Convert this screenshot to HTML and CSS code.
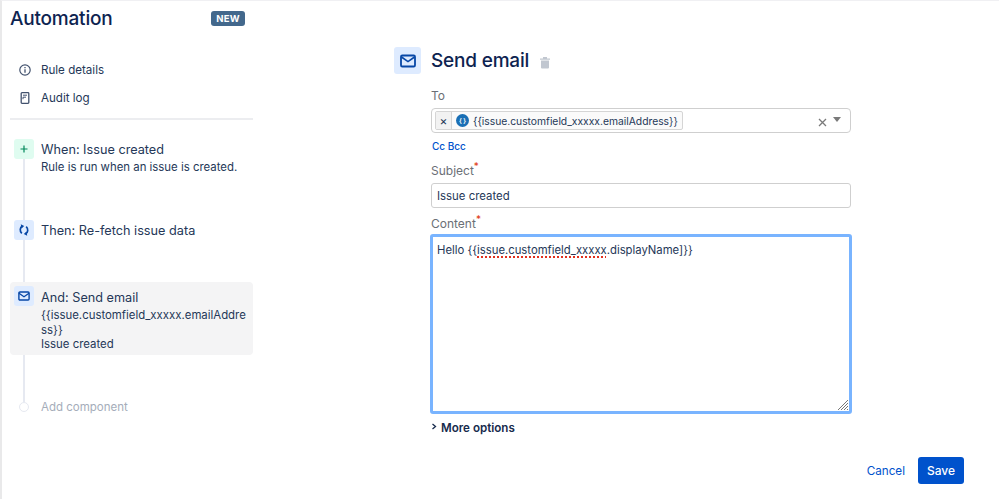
FILE: index.html
```html
<!DOCTYPE html>
<html lang="en">
<head>
  <meta charset="UTF-8" />
  <title>Automation</title>
  <link rel="stylesheet" href="styles.css">
</head>
<body>
  <div class="page">
    <aside class="sidebar">
      <div class="brand">
        <h1>Automation</h1>
        <span class="badge">NEW</span>
      </div>
      <nav class="side-nav">
        <a class="nav-item">
          <svg width="14" height="14" viewBox="0 0 14 14" fill="none"><circle cx="7" cy="7" r="5.200" stroke="#42526e" stroke-width="1.200"/><path d="M7 6.300v3.400M7 4.100v1.200" stroke="#42526e" stroke-width="1.300"/></svg>
          Rule details
        </a>
        <a class="nav-item">
          <svg width="14" height="14" viewBox="0 0 14 14" fill="none"><rect x="3.200" y="1.700" width="7.600" height="10.600" rx=".8" stroke="#42526e" stroke-width="1.300"/><path d="M5 4.200h4M5 6.200h3M5 6.200v2" stroke="#42526e" stroke-width="1"/></svg>
          Audit log
        </a>
      </nav>
      <div class="steps">
        <div class="step step-when">
          <span class="step-icon icon-green">
            <svg width="10" height="10" viewBox="0 0 10 10"><path d="M5 1.500v7M1.500 5h7" stroke="#00875a" stroke-width="1.200"/></svg>
          </span>
          <div class="step-body">
            <div class="step-title">When: Issue created</div>
            <div class="step-text">Rule is run when an issue is created.</div>
          </div>
        </div>
        <div class="step step-then">
          <span class="step-icon icon-blue">
            <svg width="14" height="14" viewBox="0 0 14 14" fill="none"><path d="M5.300 3.400C3 4.300 2.400 7.900 4.800 10.300M8.700 10.600C11 9.700 11.600 6.100 9.200 3.700" stroke="#0747a6" stroke-width="1.700"/><path d="M3.800 1.300l3.400 1.800-2.800 2.400zM10.200 12.700l-3.400-1.800 2.800-2.400z" fill="#0747a6"/></svg>
          </span>
          <div class="step-body">
            <div class="step-title">Then: Re-fetch issue data</div>
          </div>
        </div>
        <div class="step step-active">
          <span class="step-icon icon-blue">
            <svg width="12" height="12" viewBox="0 0 12 12" fill="none"><rect x=".9" y="2" width="10.200" height="8" rx="1" stroke="#0747a6" stroke-width="1.400"/><path d="M1 3.300l5 3.400 5-3.400" stroke="#0747a6" stroke-width="1.300"/></svg>
          </span>
          <div class="step-body">
            <div class="step-title">And: Send email</div>
            <div class="step-text wrap">{{issue.customfield_xxxxx.emailAddress}}<br>Issue created</div>
          </div>
        </div>
        <div class="step step-add">
          <span class="add-dot"></span>
          <div class="add-label">Add component</div>
        </div>
      </div>
    </aside>

    <main class="editor">
      <div class="editor-head">
        <span class="head-icon">
          <svg width="16" height="14" viewBox="0 0 16 14" fill="none"><rect x="1" y="1.500" width="14" height="11" rx="1.300" stroke="#0747a6" stroke-width="1.800"/><path d="M1.500 3l6.500 4.600L14.500 3" stroke="#0747a6" stroke-width="1.600"/></svg>
        </span>
        <h2>Send email</h2>
        <svg class="trash" width="12" height="13" viewBox="0 0 12 13"><path d="M1 2.500h10v1.300H1zM4 1h4v1.500H4zM2 4.500h8v7a1 1 0 0 1-1 1H3a1 1 0 0 1-1-1z" fill="#c1c7d0"/></svg>
      </div>
      <form class="form">
        <label class="field-label">To</label>
        <div class="picker">
          <span class="tag">
            <span class="tag-remove">×</span>
            <span class="tag-value">
              <span class="tag-dot">{ }</span>
              {{issue.customfield_xxxxx.emailAddress}}
            </span>
          </span>
          <svg class="clear" width="9" height="9" viewBox="0 0 9 9"><path d="M1 1l7 7M8 1L1 8" stroke="#7a7a7a" stroke-width="1.300"/></svg>
          <span class="caret"></span>
        </div>
        <div class="cc-links">Cc Bcc</div>
        <label class="field-label subject-label">Subject<sup>*</sup></label>
        <div class="text-input">Issue created</div>
        <label class="field-label content-label">Content<sup>*</sup></label>
        <div class="text-area">
          Hello {{<span class="misspelled">issue.customfield_xxxxx</span>.displayName]}}
          <svg class="grip" width="12" height="12" viewBox="0 0 12 12"><path d="M1 11L11 1M4 11l7-7M7 11l4-4M10 11l1-1" stroke="#777" stroke-width="1"/></svg>
        </div>
        <div class="more-options">
          <svg width="6" height="8" viewBox="0 0 6 8" fill="none"><path d="M1.500 1l3 2.500-3 2.500" stroke="#172b4d" stroke-width="1.300"/></svg>
          More options
        </div>
        <div class="actions">
          <a class="cancel">Cancel</a>
          <button type="button" class="save">Save</button>
        </div>
      </form>
    </main>
  </div>
</body>
</html>
```

FILE: styles.css
```css
* { box-sizing: border-box; }
html, body { height: 100%; }
body {
  margin: 0;
  font-family: Inter, "Liberation Sans", Arial, sans-serif;
  color: #172b4d;
  background: #fff;
  overflow: hidden;
}
.page {
  display: flex;
  height: 499px;
  border-top: 1px solid #f0f0f3;
  border-left: 2px solid #e9e9ea;
}

/* left column */
.sidebar {
  width: 243px;
  margin-left: 8px;
  flex-shrink: 0;
}
.brand {
  display: flex;
  align-items: center;
  justify-content: space-between;
  height: 34px;
  padding-right: 8px;
}
.brand h1 {
  margin: 0;
  font-size: 19px;
  font-weight: 500;
  letter-spacing: -0.2px;
  color: #0d2350;
}
.badge {
  background: #43688c;
  color: #fff;
  font-size: 9.500px;
  font-weight: 700;
  letter-spacing: 0.3px;
  padding: 2px 5px;
  border-radius: 3px;
  line-height: 11px;
}
.side-nav {
  padding: 21px 0 6px;
  border-bottom: 2px solid #ecedf0;
}
.nav-item {
  display: flex;
  align-items: center;
  gap: 9px;
  height: 28px;
  padding-left: 8px;
  font-size: 11.600px;
  color: #253858;
}
.steps { position: relative; padding-top: 19px; }
.steps::before {
  content: "";
  position: absolute;
  left: 13px;
  top: 30px;
  height: 252px;
  width: 2px;
  background: #e6e9f1;
}
.step {
  position: relative;
  display: flex;
  gap: 7px;
  padding-left: 4px;
  border-radius: 4px;
}
.step-when { height: 81px; }
.step-then { height: 62px; }
.step-active {
  background: #f4f4f5;
  padding-top: 4px;
  height: 73px;
}
.step-add { margin-top: 44px; align-items: center; height: 16px; padding-left: 9px; gap: 12px; }
.step-icon {
  width: 20px;
  height: 20px;
  flex-shrink: 0;
  border-radius: 3px;
  display: flex;
  align-items: center;
  justify-content: center;
}
.icon-green { background: #dffcf0; }
.icon-blue { background: #deebff; }
.step-body { min-width: 0; flex: 1; padding-top: 1px; }
.step-active .step-body { padding-top: 2px; }
.step-title {
  font-size: 12.700px;
  line-height: 20px;
  color: #253858;
}
.step-text {
  font-size: 11.400px;
  line-height: 14px;
  color: #253858;
}
.step-active .step-text { line-height: 14.500px; }
.wrap { overflow-wrap: anywhere; padding-right: 6px; }
.add-dot {
  width: 10px;
  height: 10px;
  flex-shrink: 0;
  border-radius: 50%;
  border: 1px solid #e6e9f1;
  background: #fff;
}
.add-label { font-size: 11.500px; color: #a5adba; }

/* right column */
.editor { margin-left: 141px; width: 457px; }
.editor-head {
  display: flex;
  align-items: center;
  margin-top: 46px;
  height: 27px;
}
.head-icon {
  width: 27px;
  height: 27px;
  border-radius: 3px;
  background: #deebff;
  display: flex;
  align-items: center;
  justify-content: center;
}
.editor-head h2 {
  margin: 0 0 0 10px;
  font-size: 19px;
  font-weight: 500;
  letter-spacing: -0.2px;
  color: #0d2350;
}
.trash { margin: 3px 0 0 10px; }
.form { padding-left: 37px; }
.field-label {
  display: block;
  font-size: 12px;
  line-height: 16px;
  color: #6b6f76;
  margin-top: 14px;
}
.field-label sup {
  color: #de350b;
  font-size: 10px;
  line-height: 0;
}
.picker {
  display: flex;
  align-items: center;
  height: 25px;
  margin-top: 4px;
  padding: 0 9px 0 3px;
  border: 1px solid #cfcfcf;
  border-radius: 4px;
}
.tag {
  display: flex;
  align-items: center;
  height: 19px;
  border: 1px solid #d5d5d5;
  border-radius: 2px;
  background: #fafafa;
  font-size: 10.300px;
  color: #253858;
}
.tag-remove {
  width: 16px;
  text-align: center;
  border-right: 1px solid #d5d5d5;
  line-height: 17px;
  font-size: 12px;
  background: #f2f2f2;
}
.tag-value { display: flex; align-items: center; gap: 4px; padding: 0 4px; }
.tag-dot {
  width: 13px;
  height: 13px;
  border-radius: 50%;
  background: #1a6fb5;
  color: #fff;
  font-size: 6px;
  font-weight: 700;
  line-height: 13px;
  text-align: center;
}
.clear { margin-left: auto; margin-top: 4px; }
.caret {
  margin-left: 6px;
  margin-bottom: 2px;
  border-left: 4px solid transparent;
  border-right: 4px solid transparent;
  border-top: 5px solid #7a7a7a;
}
.cc-links {
  font-size: 10px;
  font-weight: 500;
  line-height: 14px;
  margin-top: 6px;
  padding-left: 1px;
  color: #0052cc;
}
.field-label.subject-label { margin-top: 10px; }
.text-input {
  height: 25px;
  margin-top: 4px;
  padding: 0 5px;
  border: 1px solid #cfcfcf;
  border-radius: 3px;
  font-size: 11.400px;
  line-height: 24px;
  color: #253858;
}
.field-label.content-label { margin-top: 8px; }
.text-area {
  position: relative;
  height: 180px;
  margin: 2px -1px 0;
  padding: 5px 4px;
  border: 3px solid #79b4ff;
  border-radius: 3px;
  font-size: 11.300px;
  line-height: 16px;
  color: #253858;
}
.misspelled {
  text-decoration: underline dotted #e0301e 1.500px;
  text-underline-offset: 2px;
}
.grip { position: absolute; right: 0; bottom: 0; }
.more-options {
  display: flex;
  align-items: center;
  gap: 4px;
  margin-top: 6px;
  font-size: 11.600px;
  font-weight: 600;
  line-height: 16px;
  color: #172b4d;
}
.more-options svg { margin-bottom: 3px; }
.actions {
  display: flex;
  align-items: center;
  justify-content: flex-end;
  gap: 13px;
  margin-top: 21px;
  margin-right: -113px;
}
.cancel { font-size: 11.700px; color: #0052cc; }
.save {
  width: 46px;
  height: 27px;
  border: 0;
  border-radius: 3px;
  background: #0052cc;
  color: #fff;
  font-family: inherit;
  font-size: 12px;
  font-weight: 500;
}
```
